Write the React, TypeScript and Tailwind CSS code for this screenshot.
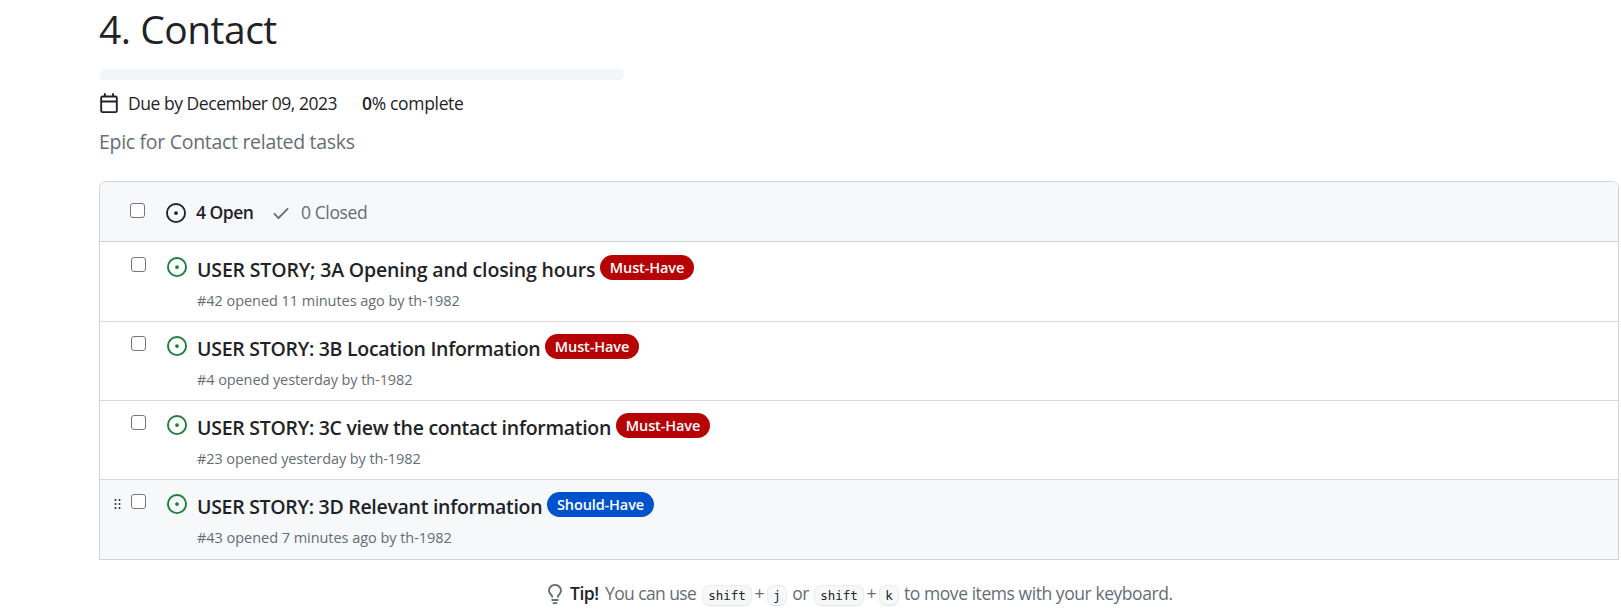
import React from "react";

type Story = {
  title: string;
  meta: string;
  label: string;
  labelClass: string;
  titleClass: string;
  metaClass: string;
  active?: boolean;
};

const stories: Story[] = [
  {
    title: "USER STORY; 3A Opening and closing hours",
    meta: "#42 opened 11 minutes ago by th-1982",
    label: "Must-Have",
    labelClass: "bg-[#b60205] w-[94px]",
    titleClass: "w-[403px] tracking-[-0.16px]",
    metaClass: "tracking-[-0.05px]",
  },
  {
    title: "USER STORY: 3B Location Information",
    meta: "#4 opened yesterday by th-1982",
    label: "Must-Have",
    labelClass: "bg-[#b60205] w-[94px]",
    titleClass: "w-[348px] tracking-[-0.28px]",
    metaClass: "tracking-[-0.09px]",
  },
  {
    title: "USER STORY: 3C view the contact information",
    meta: "#23 opened yesterday by th-1982",
    label: "Must-Have",
    labelClass: "bg-[#b60205] w-[94px]",
    titleClass: "w-[419px] tracking-[-0.28px]",
    metaClass: "tracking-[-0.09px]",
  },
  {
    title: "USER STORY: 3D Relevant information",
    meta: "#43 opened 7 minutes ago by th-1982",
    label: "Should-Have",
    labelClass: "bg-[#0052cc] w-[107px]",
    titleClass: "w-[350px] tracking-[-0.29px]",
    metaClass: "tracking-[-0.04px]",
    active: true,
  },
];

function OpenIcon({ className }: { className: string }) {
  return (
    <svg viewBox="0 0 16 16" fill="currentColor" className={`h-5 w-5 shrink-0 ${className}`}>
      <path d="M8 9.5a1.5 1.5 0 1 0 0-3 1.5 1.5 0 0 0 0 3Z" />
      <path d="M8 0a8 8 0 1 1 0 16A8 8 0 0 1 8 0ZM1.5 8a6.5 6.5 0 1 0 13 0 6.5 6.5 0 0 0-13 0Z" />
    </svg>
  );
}

function Checkbox() {
  return (
    <span role="checkbox" aria-checked="false" className="block h-[15px] w-[15px] shrink-0 rounded-[3px] border border-[#767676] bg-white" />
  );
}

function Grip() {
  return (
    <svg viewBox="0 0 8 12" className="h-3 w-2 fill-[#24292f]">
      {[2, 6, 10].map((y) => (
        <React.Fragment key={y}>
          <circle cx="2.5" cy={y} r="1" />
          <circle cx="6.5" cy={y} r="1" />
        </React.Fragment>
      ))}
    </svg>
  );
}

function Key({ className, children }: { className: string; children: string }) {
  return (
    <kbd className={`mt-[3px] flex h-[21px] items-center justify-center rounded-[7px] border border-[#e9eef2] border-b-[#dfe5ea] bg-[#f6f8fa] pt-0.5 font-['DejaVu_Sans_Mono',monospace] text-[12.5px] leading-none text-[#1f2328] ${className}`}>
      {children}
    </kbd>
  );
}

export default function App() {
  return (
    <main className="h-[611px] overflow-hidden bg-white pl-[99px] pr-[2px] font-['Open_Sans','Noto_Sans',sans-serif] text-[17.5px] text-[#1f2328]">
      <h1 className="h-[69px] whitespace-nowrap pt-[4px] text-[39px] leading-[50px] tracking-[-0.5px]">4. Contact</h1>
      <div className="h-[11px] w-[525px] rounded-[6px] bg-[#f3f6f9]" />

      <div className="flex h-[46px] items-center whitespace-nowrap leading-6">
        <svg viewBox="0 0 16 16" fill="currentColor" className="mr-[9px] h-5 w-5 shrink-0">
          <path d="M4.75 0a.75.75 0 0 1 .75.75V2h5V.75a.75.75 0 0 1 1.5 0V2h1.25c.966 0 1.75.784 1.75 1.75v10.5A1.75 1.75 0 0 1 13.25 16H2.75A1.75 1.75 0 0 1 1 14.25V3.75C1 2.784 1.784 2 2.75 2H4V.75A.75.75 0 0 1 4.75 0ZM2.5 7.5v6.75c0 .138.112.25.25.25h10.5a.25.25 0 0 0 .25-.25V7.5Zm10.75-4H2.75a.25.25 0 0 0-.25.25V6h11V3.75a.25.25 0 0 0-.25-.25Z" />
        </svg>
        <span className="w-[234px] tracking-[-0.46px]">Due by December 09, 2023</span>
        <span className="tracking-[-0.33px]"><b className="font-semibold">0</b>% complete</span>
      </div>
      <p className="h-[55px] whitespace-nowrap pt-[2px] text-[19.5px] leading-[28px] tracking-[-0.3px] text-[#656d76]">Epic for Contact related tasks</p>

      <section className="h-[379px] rounded-t-[7px] border border-[#cdd4da]">
        <div className="flex h-[60px] items-center whitespace-nowrap rounded-t-[6px] border-b border-[#cdd4da] bg-[#f6f8fa] pl-[30px] pt-[2px]">
          <div className="-mt-[5px]"><Checkbox /></div>
          <OpenIcon className="ml-[21px]" />
          <span className="ml-2.5 w-[75px] font-semibold tracking-[-0.5px]">4 Open</span>
          <svg viewBox="0 0 16 16" fill="currentColor" className="h-5 w-5 shrink-0 text-[#656d76]">
            <path d="M13.78 4.22a.75.75 0 0 1 0 1.06l-7.25 7.25a.75.75 0 0 1-1.06 0L2.22 9.28a.751.751 0 0 1 1.06-1.06L6 10.94l6.72-6.72a.75.75 0 0 1 1.06 0Z" />
          </svg>
          <span className="ml-[10px] tracking-[-0.4px] text-[#656d76]">0 Closed</span>
        </div>
        {stories.map((s, i) => (
          <article
            key={s.title}
            className={`flex h-[79px] border-t last:h-[80px] ${i === 0 ? "border-transparent" : "border-[#d5dbe0]"} ${s.active ? "bg-[#f6f8fa]" : ""}`}
          >
            <div className="w-[31px] pl-[13px] pt-[18px]">{s.active && <Grip />}</div>
            <div className="pt-[14px]"><Checkbox /></div>
            <div className="ml-[21px] pt-[14px]"><OpenIcon className="text-[#1a7f37]" /></div>
            <div className="ml-2.5 pt-3">
              <div className="flex h-[31px] whitespace-nowrap">
                <h2 className={`text-[19.5px] font-semibold leading-[30px] ${s.titleClass}`}>{s.title}</h2>
                <span className={`h-[25px] rounded-full text-center text-[14.5px] font-semibold leading-[25px] tracking-[-0.12px] text-white ${s.labelClass}`}>
                  {s.label}
                </span>
              </div>
              <p className={`whitespace-nowrap pt-[3px] text-[14.5px] leading-[24px] text-[#656d76] ${s.metaClass}`}>{s.meta}</p>
            </div>
          </article>
        ))}
      </section>

      <footer className="flex h-[51px] items-center whitespace-nowrap pl-[446px] pt-[16px] text-[#656d76]">
        <svg viewBox="0 0 16 16" fill="currentColor" className="mr-[5px] h-5 w-5 shrink-0">
          <path d="M8 1.5c-2.363 0-4 1.69-4 3.75 0 .984.424 1.625.984 2.304l.214.253c.223.264.47.556.673.848.284.411.537.896.621 1.49a.75.75 0 0 1-1.484.211c-.04-.282-.163-.547-.37-.847a8.456 8.456 0 0 0-.542-.68c-.084-.1-.173-.205-.268-.32C3.201 7.75 2.5 6.766 2.5 5.25 2.5 2.31 4.863 0 8 0s5.5 2.31 5.5 5.25c0 1.516-.701 2.5-1.328 3.259-.095.115-.184.22-.268.319-.207.245-.383.453-.541.681-.208.3-.33.565-.37.847a.751.751 0 0 1-1.485-.212c.084-.593.337-1.078.621-1.489.203-.292.45-.584.673-.848.075-.088.147-.173.213-.253.561-.679.985-1.32.985-2.304 0-2.06-1.637-3.75-4-3.75ZM5.75 12h4.5a.75.75 0 0 1 0 1.5h-4.5a.75.75 0 0 1 0-1.5ZM6 15.25a.75.75 0 0 1 .75-.75h2.5a.75.75 0 0 1 0 1.5h-2.5a.75.75 0 0 1-.75-.75Z" />
        </svg>
        <b className="w-[35px] font-semibold tracking-[-0.5px] text-[#1f2328]">Tip!</b>
        <span className="w-[97px] tracking-[-0.6px]">You can use</span>
        <Key className="w-[50px]">shift</Key>
        <span className="w-[15px] text-center">+</span>
        <Key className="w-[20px]">j</Key>
        <span className="w-[27px] text-center tracking-[-0.5px]">or</span>
        <Key className="w-[50px]">shift</Key>
        <span className="w-[15px] text-center">+</span>
        <Key className="w-[20px]">k</Key>
        <span className="ml-[5px] tracking-[-0.44px]">to move items with your keyboard.</span>
      </footer>
    </main>
  );
}
